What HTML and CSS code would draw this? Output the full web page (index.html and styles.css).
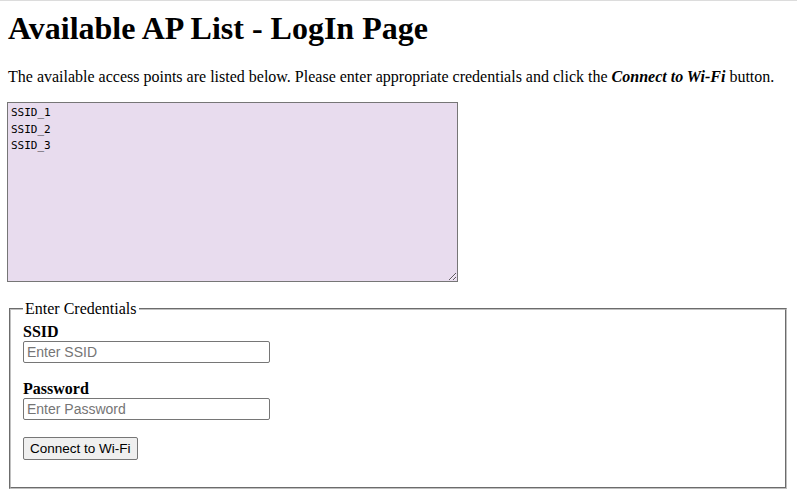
FILE: index.html
```html
<!DOCTYPE html>
<html lang="en">
<head>
<meta charset="utf-8">
<title>Available AP List - LogIn Page</title>
<link rel="stylesheet" href="styles.css">
</head>
<body>
<div class="topline"></div>
<main class="page">
  <h1 class="title">Available AP List - LogIn Page</h1>
  <p class="intro">The available access points are listed below. Please enter appropriate credentials and click the <b><i>Connect to Wi-Fi</i></b> button.</p>
  <textarea class="ap-list" readonly>SSID_1
SSID_2
SSID_3</textarea>
  <fieldset class="creds">
    <legend class="creds-legend">Enter Credentials</legend>
    <div class="field">
      <label class="field-label" for="ssid">SSID</label>
      <input class="field-input" id="ssid" type="text" placeholder="Enter SSID">
    </div>
    <div class="field">
      <label class="field-label" for="pwd">Password</label>
      <input class="field-input" id="pwd" type="password" placeholder="Enter Password">
    </div>
    <div class="actions">
      <button class="connect-btn" type="button">Connect to Wi-Fi</button>
    </div>
  </fieldset>
</main>
</body>
</html>
```
FILE: styles.css
```css
html, body {
  margin: 0;
  padding: 0;
  background: #ffffff;
  color: #000000;
  font-family: "Liberation Serif", "Times New Roman", serif;
  font-size: 16px;
}

.topline {
  height: 1px;
  background: #dcdcdc;
}

.page {
  padding: 0 8px;
}

.title {
  margin: 9px 0 21px;
  font-size: 32px;
  font-weight: bold;
  line-height: 37px;
}

.intro {
  margin: 0 0 16px;
  line-height: 18px;
}

.ap-list {
  display: block;
  box-sizing: border-box;
  width: 451px;
  height: 180px;
  margin: 0 0 0 -1px;
  padding: 2px 3px;
  border: 1px solid #767676;
  background: #e8dcee;
  font-family: "DejaVu Sans Mono", monospace;
  font-size: 11px;
  line-height: 16.5px;
  color: #000;
  resize: both;
}

.creds {
  margin: 18px 2px 0 1px;
  padding: 5px 12px 10px;
  border: 2px groove #c0c0c0;
  display: flex;
  flex-direction: column;
  align-items: flex-start;
}

.creds-legend {
  padding: 0 2px;
  font-size: 16px;
  line-height: 18px;
}

.field {
  display: flex;
  flex-direction: column;
  align-items: flex-start;
  margin-bottom: 17px;
}

.field-label {
  font-weight: bold;
  line-height: 18px;
}

.field-input {
  box-sizing: border-box;
  width: 247px;
  height: 22px;
  margin: 0;
  padding: 1px 3px;
  border: 1px solid #767676;
  border-radius: 2px;
  font-family: "Liberation Sans", Arial, sans-serif;
  font-size: 14px;
  background: #fff;
}

.field-input::placeholder {
  color: #757575;
}

.actions {
  padding-bottom: 17px;
}

.connect-btn {
  box-sizing: border-box;
  height: 23px;
  margin: 0;
  padding: 1px 6px;
  border: 1px solid #767676;
  border-radius: 2px;
  background: #efefef;
  color: #000;
  font-family: "Liberation Sans", Arial, sans-serif;
  font-size: 13.5px;
}
```
